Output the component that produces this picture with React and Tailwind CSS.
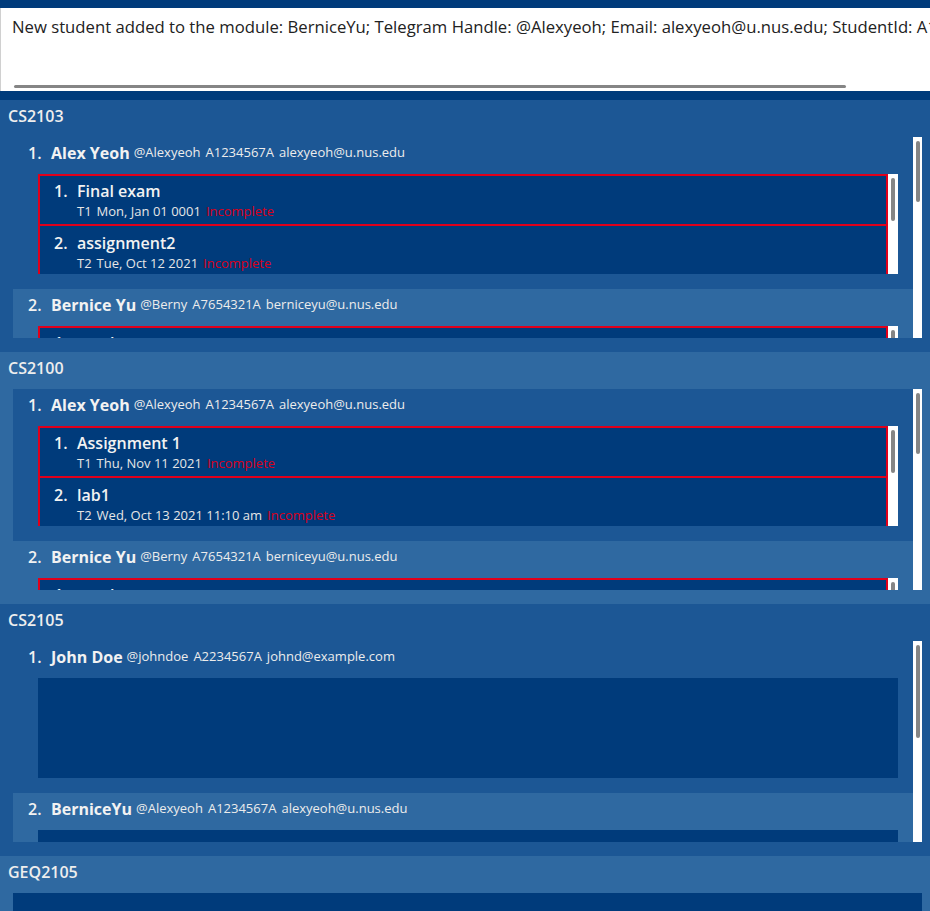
const FONT = { fontFamily: '"Open Sans", "Liberation Sans", sans-serif' };

const alex = { name: 'Alex Yeoh', tele: '@Alexyeoh', id: 'A1234567A', email: 'alexyeoh@u.nus.edu' };
const berny = { name: 'Bernice Yu', tele: '@Berny', id: 'A7654321A', email: 'berniceyu@u.nus.edu' };

const modules = [
  {
    code: 'CS2103',
    thumb: 61,
    students: [
      {
        ...alex,
        tasks: [
          { title: 'Final exam', tag: 'T1', date: 'Mon, Jan 01 0001' },
          { title: 'assignment2', tag: 'T2', date: 'Tue, Oct 12 2021' },
          { title: 'quiz1', tag: 'T3', date: 'Wed, Oct 20 2021' },
        ],
      },
      {
        ...berny,
        tasks: [
          { title: 'mock test', tag: 'T1', date: 'Fri, Oct 15 2021' },
          { title: 'lab2', tag: 'T2', date: 'Sat, Oct 16 2021' },
          { title: 'quiz1', tag: 'T3', date: 'Wed, Oct 20 2021' },
        ],
      },
      { ...alex, tasks: [] },
    ],
  },
  {
    code: 'CS2100',
    thumb: 61,
    students: [
      {
        ...alex,
        tasks: [
          { title: 'Assignment 1', tag: 'T1', date: 'Thu, Nov 11 2021' },
          { title: 'lab1', tag: 'T2', date: 'Wed, Oct 13 2021 11:10 am' },
          { title: 'lab2', tag: 'T3', date: 'Wed, Oct 20 2021' },
        ],
      },
      {
        ...berny,
        tasks: [
          { title: 'mock test', tag: 'T1', date: 'Fri, Oct 15 2021' },
          { title: 'lab2', tag: 'T2', date: 'Sat, Oct 16 2021' },
          { title: 'quiz1', tag: 'T3', date: 'Wed, Oct 20 2021' },
        ],
      },
      { ...alex, tasks: [] },
    ],
  },
  {
    code: 'CS2105',
    thumb: 93,
    students: [
      { name: 'John Doe', tele: '@johndoe', id: 'A2234567A', email: 'johnd@example.com', tasks: [] },
      { name: 'BerniceYu', tele: '@Alexyeoh', id: 'A1234567A', email: 'alexyeoh@u.nus.edu', tasks: [] },
    ],
  },
  { code: 'GEQ2105', students: [] },
];

function Scrollbar({ thumb, track }) {
  return (
    <div className={`shrink-0 bg-white pt-[4px] pl-[3px] ${track}`}>
      <div className="w-[4px] rounded-full bg-[#858585]" style={{ height: thumb }} />
    </div>
  );
}

function TaskCard({ task, index }) {
  return (
    <div
      className={`h-[52px] shrink-0 border-2 border-[#e0001b] bg-[#003b7b] pl-[14px] ${
        index > 0 ? 'border-t-0 pt-[2px]' : ''
      }`}
    >
      <div className="flex items-center h-[30px] text-[16px] font-semibold text-[#f2f2f2]">
        <span className="w-[23px]">{index + 1}.</span>
        <span>{task.title}</span>
      </div>
      <div className="flex items-center -mt-[4px] pl-[23px] text-[13px] text-[#e6e6e6] gap-[5px]">
        <span>{task.tag}</span>
        <span>{task.date}</span>
        <span className="text-[#d8001c]">Incomplete</span>
      </div>
    </div>
  );
}

function StudentCard({ student, index }) {
  const shade = index % 2 === 0 ? 'bg-[#1c5795]' : 'bg-[#2f69a1]';
  return (
    <div className={`h-[152px] shrink-0 ${shade}`}>
      <div className="h-[37px] flex items-center pl-[15px] pb-[5px] text-[#f2f2f2]">
        <span className="w-[23px] text-[16px] font-semibold">{index + 1}.</span>
        <span className="text-[16px] font-bold">{student.name}</span>
        <span className="ml-[4px] text-[13px] flex gap-[5px] text-[#ececec]">
          <span>{student.tele}</span>
          <span>{student.id}</span>
          <span>{student.email}</span>
        </span>
      </div>
      {student.tasks.length > 0 ? (
        <div className="ml-[25px] mr-[15px] h-[100px] flex">
          <div className="flex-1 overflow-hidden bg-[#003b7b] flex flex-col">
            {student.tasks.map((t, i) => (
              <TaskCard key={i} task={t} index={i} />
            ))}
          </div>
          <Scrollbar thumb={43} track="w-[10px]" />
        </div>
      ) : (
        <div className="ml-[25px] mr-[15px] h-[100px] bg-[#003b7b]" />
      )}
    </div>
  );
}

function ModuleCard({ mod, index }) {
  const shade = index % 2 === 0 ? 'bg-[#1c5795]' : 'bg-[#2f69a1]';
  return (
    <section className={`h-[252px] shrink-0 flex flex-col ${shade}`}>
      <div className="h-[37px] pl-[8px] pt-[5px] leading-[22px] text-[16px] font-semibold text-[#eeeeee]">
        {mod.code}
      </div>
      {mod.students.length > 0 ? (
        <div className="ml-[13px] mr-[8px] h-[201px] flex">
          <div className="flex-1 overflow-hidden flex flex-col">
            {mod.students.map((s, i) => (
              <StudentCard key={i} student={s} index={i} />
            ))}
          </div>
          <Scrollbar thumb={mod.thumb} track="w-[9px]" />
        </div>
      ) : (
        <div className="ml-[13px] mr-[8px] h-[201px] bg-[#003b7b]" />
      )}
    </section>
  );
}

export default function App() {
  return (
    <div style={FONT} className="w-[930px] h-[911px] overflow-hidden bg-[#003b7b] flex flex-col">
      <div className="mt-[8px] h-[83px] shrink-0 bg-white border-l border-[#d0d0d0] flex flex-col">
        <div className="pl-[11px] pt-[8px] text-[16.7px] leading-[22px] text-[#222] whitespace-nowrap overflow-hidden">
          New student added to the module: BerniceYu; Telegram Handle: @Alexyeoh; Email: alexyeoh@u.nus.edu; StudentId: A1234567A
        </div>
        <div className="mt-auto mb-[3px] ml-[13px] w-[832px] h-[3px] rounded-full bg-[#858585]" />
      </div>
      <div className="mt-[9px] flex flex-col">
        {modules.map((m, i) => (
          <ModuleCard key={m.code} mod={m} index={i} />
        ))}
      </div>
    </div>
  );
}
